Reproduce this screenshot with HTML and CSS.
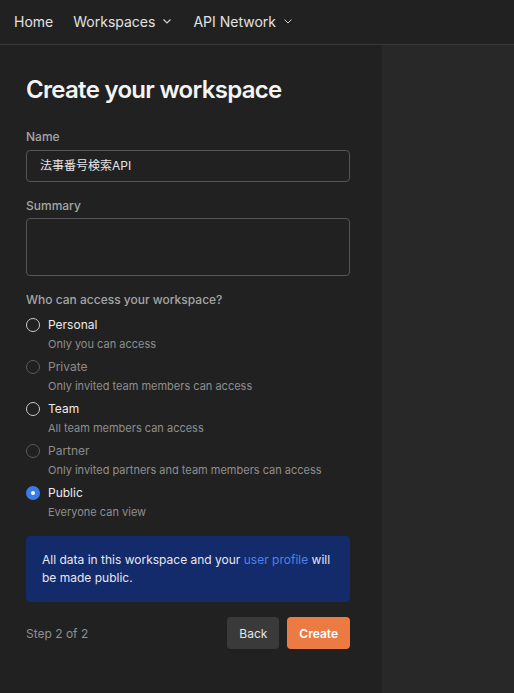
FILE: index.html
```html
<!DOCTYPE html>
<html lang="en">
<head>
<meta charset="utf-8">
<title>Create your workspace</title>
<link rel="stylesheet" href="styles.css">
</head>
<body>
<header class="topbar">
  <nav class="nav">
    <span class="nav-item">Home</span>
    <span class="nav-item">Workspaces
      <svg class="chev" width="10" height="10" viewBox="0 0 10 10"><path d="M1.5 3.5 5 7l3.5-3.5" fill="none" stroke="currentColor" stroke-width="1.2"/></svg>
    </span>
    <span class="nav-item nav-item-last">API Network
      <svg class="chev" width="10" height="10" viewBox="0 0 10 10"><path d="M1.5 3.5 5 7l3.5-3.5" fill="none" stroke="currentColor" stroke-width="1"/></svg>
    </span>
  </nav>
</header>
<main class="layout">
  <section class="panel">
    <h1 class="title">Create your workspace</h1>
    <label class="label">Name</label>
    <div class="input">法事番号検索API</div>
    <label class="label label-gap">Summary</label>
    <div class="input textarea"></div>
    <div class="label label-gap">Who can access your workspace?</div>
    <div class="options">
      <div class="option">
        <span class="radio"></span>
        <div class="option-text">
          <div class="option-label">Personal</div>
          <div class="option-desc">Only you can access</div>
        </div>
      </div>
      <div class="option disabled">
        <span class="radio"></span>
        <div class="option-text">
          <div class="option-label">Private</div>
          <div class="option-desc">Only invited team members can access</div>
        </div>
      </div>
      <div class="option">
        <span class="radio"></span>
        <div class="option-text">
          <div class="option-label">Team</div>
          <div class="option-desc">All team members can access</div>
        </div>
      </div>
      <div class="option disabled">
        <span class="radio"></span>
        <div class="option-text">
          <div class="option-label">Partner</div>
          <div class="option-desc">Only invited partners and team members can access</div>
        </div>
      </div>
      <div class="option">
        <span class="radio checked"></span>
        <div class="option-text">
          <div class="option-label">Public</div>
          <div class="option-desc">Everyone can view</div>
        </div>
      </div>
    </div>
    <div class="info">All data in this workspace and your <span class="link">user profile</span> will be made public.</div>
    <div class="footer">
      <span class="step">Step 2 of 2</span>
      <div class="actions">
        <button class="btn btn-back">Back</button>
        <button class="btn btn-create">Create</button>
      </div>
    </div>
  </section>
  <aside class="side"></aside>
</main>
</body>
</html>
```

FILE: styles.css
```css
html, body {
  margin: 0;
  padding: 0;
  height: 100%;
}
body {
  background: #212121;
  font-family: Inter, "Noto Sans CJK JP", sans-serif;
  color: #e6e6e6;
  display: flex;
  flex-direction: column;
}
.topbar {
  border-bottom: 1px solid #3a3a3a;
  background: #212121;
  display: flex;
  align-items: center;
  padding: 0 14px 2px;
  box-sizing: border-box;
  height: 45px;
  flex: none;
}
.nav {
  display: flex;
  align-items: center;
  gap: 20px;
}
.nav-item {
  font-size: 14px;
  color: #e2e2e2;
  display: flex;
  align-items: center;
  gap: 7px;
}
.nav-item-last {
  margin-left: 1px;
}
.chev {
  color: #cfcfcf;
}
.layout {
  flex: 1;
  display: flex;
}
.panel {
  width: 324px;
  padding: 29px 32px 0 26px;
  background: #212121;
  display: flex;
  flex-direction: column;
}
.side {
  flex: 1;
  background: #282828;
}
.title {
  margin: 0 0 23px;
  font-size: 24px;
  line-height: 32px;
  font-weight: 600;
  color: #f4f4f4;
  letter-spacing: -0.7px;
}
.label {
  display: block;
  font-size: 12px;
  line-height: 16px;
  font-weight: 500;
  color: #a6a6a6;
  margin-bottom: 5px;
}
.label-gap {
  margin-top: 16px;
  margin-bottom: 4px;
}
.input {
  height: 30px;
  border: 1px solid #555;
  border-radius: 4px;
  font-size: 12px;
  line-height: 30px;
  padding: 0 13px;
  color: #e6e6e6;
}
.textarea {
  height: 56px;
}
.options {
  display: flex;
  flex-direction: column;
  gap: 7px;
  margin-top: 5px;
}
.option {
  display: flex;
  gap: 8px;
  align-items: flex-start;
}
.radio {
  box-sizing: border-box;
  width: 14px;
  height: 14px;
  border: 1.5px solid #c8c8c8;
  border-radius: 50%;
  margin-top: 1px;
  flex: none;
}
.option.disabled .radio {
  border-color: #5a5a5a;
}
.radio.checked {
  border: 5px solid #3b7be8;
  background: #fff;
}
.option-label {
  font-size: 12px;
  line-height: 16px;
  color: #ececec;
}
.option.disabled .option-label {
  color: #8c8c8c;
}
.option-desc {
  margin-top: 3px;
  font-size: 11px;
  line-height: 16px;
  color: #8f8f8f;
}
.info {
  margin-top: 16px;
  background: #132a6b;
  border-radius: 4px;
  padding: 15px 16px;
  font-size: 12px;
  line-height: 18px;
  color: #e8e8ee;
}
.link {
  color: #4c82e4;
}
.footer {
  margin-top: 15px;
  display: flex;
  align-items: center;
  justify-content: space-between;
}
.step {
  font-size: 12px;
  color: #8f8f8f;
}
.actions {
  display: flex;
  gap: 8px;
}
.btn {
  height: 32px;
  border: none;
  border-radius: 4px;
  font-family: Inter, sans-serif;
  font-size: 12px;
  padding: 0 12px;
  cursor: pointer;
}
.btn-back {
  background: #3a3a3a;
  color: #e6e6e6;
}
.btn-create {
  background: #ec7a43;
  color: #fff;
  font-weight: 600;
}
```
